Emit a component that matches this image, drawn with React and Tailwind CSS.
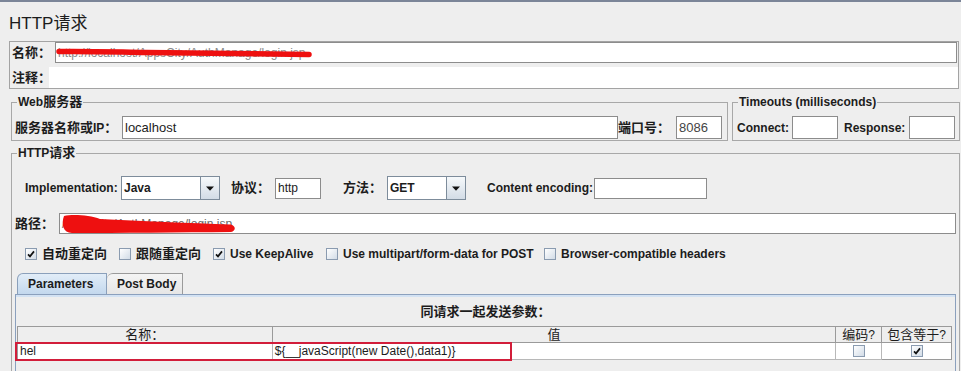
function Zh({ children, className = "" }) {
  return <span className={`text-[13px] ${className}`}>{children}</span>;
}

function Check({ checked }) {
  return (
    <span className="inline-flex h-[12px] w-[12px] shrink-0 items-center justify-center border border-[#8a9bb0] bg-linear-to-br from-white to-[#d2dce7]">
      {checked && (
        <svg width="8" height="8" viewBox="0 0 8 8">
          <path d="M1 4.3 L3 6.4 L7 1.4" fill="none" stroke="#111" strokeWidth="1.7" />
        </svg>
      )}
    </span>
  );
}

function Field({ className = "", children }) {
  return (
    <div className={`flex items-center border border-[#8c8c8c] bg-white pl-[2px] ${className}`}>
      {children}
    </div>
  );
}

function Combo({ value, className = "" }) {
  return (
    <div className={`flex h-[24px] border border-[#7d8c9b] bg-white ${className}`}>
      <div className="flex flex-1 items-center pl-[2px] font-bold">{value}</div>
      <div className="flex w-[19px] items-center justify-center border-l border-[#7d8c9b] bg-linear-to-b from-[#f6f9fb] to-[#d3dce6]">
        <svg width="8" height="5" viewBox="0 0 8 5">
          <path d="M0 0.5H8L4 4.8Z" fill="#111" />
        </svg>
      </div>
    </div>
  );
}

export default function App() {
  return (
    <div className="h-[371px] w-[961px] overflow-hidden bg-[#eeeeee] font-['Liberation_Sans','Noto_Sans_CJK_SC',sans-serif] text-[12px] leading-[14px] text-[#1c1c1c]">
      {/* window top edge */}
      <div className="h-[2px] bg-[#7b8598]" />

      {/* title */}
      <div className="h-[39px] pl-[9px] pt-[12px] text-[17px] leading-[20px]">HTTP请求</div>

      {/* name + comment */}
      <div className="ml-[9px] flex h-[48px] w-[950px] flex-col border border-[#a3a3a3]">
        <div className="flex h-[21px]">
          <div className="flex w-[45px] items-center whitespace-nowrap pl-[2px] font-bold">
            <Zh>名称：</Zh>
          </div>
          <div className="relative mr-[1px] flex flex-1 items-center border border-[#8c8c8c] bg-white pl-[2px] text-[#8a8a8a]">
            http://localhost/AppsCity/AuthManage/login.jsp
            <svg className="absolute left-0 top-0" width="270" height="20" viewBox="0 0 270 20">
              <path d="M3 8.5 C 30 8, 60 9, 90 9.5 C 150 10, 210 10.5, 253 11.5" fill="none" stroke="#ee1010" strokeWidth="5.5" strokeLinecap="round" />
            </svg>
          </div>
        </div>
        <div className="mt-[4px] flex h-[21px]">
          <div className="flex w-[39px] shrink-0 items-center whitespace-nowrap pl-[2px] font-bold">
            <Zh>注释：</Zh>
          </div>
          <div className="flex-1 bg-white" />
        </div>
      </div>

      {/* web server + timeouts */}
      <div className="ml-[11px] mt-[6px] flex gap-[4px]">
        <fieldset className="w-[717px] border border-[#a8a8a8] pb-[1px] pl-[2px] pr-[4px]">
          <legend className="ml-[3px] px-[1px] font-bold leading-[14px]">
            Web<Zh>服务器</Zh>
          </legend>
          <div className="mt-[7px] flex h-[23px] items-center">
            <span className="w-[108px] whitespace-nowrap pl-[1px] font-bold">
              <Zh>服务器名称或</Zh>IP<Zh>：</Zh>
            </span>
            <Field className="h-[23px] w-[496px] text-[13px]">localhost</Field>
            <span className="w-[58px] whitespace-nowrap font-bold">
              <Zh>端口号：</Zh>
            </span>
            <Field className="h-[23px] w-[46px] text-[13px] text-[#444]">8086</Field>
          </div>
        </fieldset>

        <fieldset className="w-[228px] border border-[#a8a8a8] pb-[1px] pl-[3px] pr-[3px]">
          <legend className="ml-[2px] px-[1px] font-bold leading-[14px]">Timeouts (milliseconds)</legend>
          <div className="mt-[7px] flex h-[23px] items-center">
            <span className="w-[56px] pl-[1px] font-bold">Connect:</span>
            <Field className="h-[23px] w-[46px]" />
            <span className="ml-[6px] w-[65px] font-bold">Response:</span>
            <Field className="h-[23px] w-[46px]" />
          </div>
        </fieldset>
      </div>

      {/* HTTP request */}
      <fieldset className="ml-[11px] mt-[5px] h-[240px] w-[949px] border border-[#a8a8a8] pl-[2px] pr-[3px]">
        <legend className="ml-[3px] px-[1px] font-bold leading-[14px]">
          HTTP<Zh>请求</Zh>
        </legend>

        <div className="mt-[16px] flex h-[24px] items-center">
          <span className="ml-[11px] w-[96px] font-bold">Implementation:</span>
          <Combo value="Java" className="w-[99px]" />
          <span className="ml-[11px] w-[44px] whitespace-nowrap font-bold">
            <Zh>协议：</Zh>
          </span>
          <Field className="h-[21px] w-[46px]">http</Field>
          <span className="ml-[22px] w-[44px] whitespace-nowrap font-bold">
            <Zh>方法：</Zh>
          </span>
          <Combo value="GET" className="w-[79px]" />
          <span className="ml-[21px] w-[107px] font-bold">Content encoding:</span>
          <Field className="h-[21px] w-[113px]" />
        </div>

        <div className="mt-[13px] flex h-[21px]">
          <span className="flex w-[45px] items-center whitespace-nowrap pl-[1px] font-bold">
            <Zh>路径：</Zh>
          </span>
          <div className="relative flex flex-1 items-center border border-[#8c8c8c] bg-white pl-[2px] text-[#6a6a6a]">
            /AppsCity/AuthManage/login.jsp
            <svg className="absolute left-0 top-0" width="190" height="21" viewBox="0 0 190 21">
              <path
                d="M4 2 C 12 0, 30 1, 40 5 C 80 7, 130 9, 171 10.5 C 176 12, 176 17, 171 18 C 120 18.5, 60 19, 12 19 C 3 19, 1 10, 4 2 Z"
                fill="#ee1010"
              />
            </svg>
          </div>
        </div>

        <div className="mt-[13px] flex h-[14px] items-center">
          <div className="ml-[11px] flex w-[94px] items-center gap-[5px] font-bold">
            <Check checked />
            <Zh>自动重定向</Zh>
          </div>
          <div className="flex w-[94px] items-center gap-[5px] font-bold">
            <Check />
            <Zh>跟随重定向</Zh>
          </div>
          <div className="flex w-[113px] items-center gap-[5px] font-bold">
            <Check checked />
            <span>Use KeepAlive</span>
          </div>
          <div className="flex w-[218px] items-center gap-[5px] font-bold">
            <Check />
            <span>Use multipart/form-data for POST</span>
          </div>
          <div className="flex items-center gap-[5px] font-bold">
            <Check />
            <span>Browser-compatible headers</span>
          </div>
        </div>

        {/* tabs */}
        <div className="ml-[1px] mt-[12px] flex h-[21px] items-end pl-[2px]">
          <div className="flex h-[21px] w-[90px] items-center rounded-tl-[6px] border border-b-0 border-[#8ba0bb] bg-linear-to-b from-[#e2edf8] to-[#c3d8ee] pl-[10px] font-bold">
            Parameters
          </div>
          <div className="flex h-[21px] w-[76px] items-center rounded-tl-[6px] border border-b-0 border-l-0 border-[#9a9a9a] bg-linear-to-b from-[#f4f4f4] to-[#e6e6e6] pl-[10px] font-bold">
            Post Body
          </div>
        </div>

        <div className="ml-[1px] flex h-[90px] flex-col border-l border-r border-t border-[#8ba0bd]">
          <div className="h-[2px] bg-[#d3e2f3]" />
          <div className="mt-[7px] flex h-[16px] items-center justify-center font-bold">
            <Zh>同请求一起发送参数：</Zh>
          </div>

          <div className="relative ml-[1px] mt-[6px] w-[935px]">
            <div className="flex h-[17px] border-l border-t border-[#9a9a9a]">
              <div className="flex w-[255px] items-center justify-center border-b border-r border-[#9a9a9a]">
                <Zh>名称：</Zh>
              </div>
              <div className="flex w-[564px] items-center justify-center border-b border-r border-[#9a9a9a]">
                <Zh>值</Zh>
              </div>
              <div className="flex w-[46px] items-center justify-center border-b border-r border-[#9a9a9a]">
                <Zh>编码</Zh>?
              </div>
              <div className="flex w-[70px] items-center justify-center border-b border-r border-[#9a9a9a]">
                <Zh>包含等于</Zh>?
              </div>
            </div>
            <div className="flex h-[17px] border-l border-[#9a9a9a] bg-white">
              <div className="flex w-[255px] items-center border-b border-r border-[#b8b8b8] pl-[2px]">hel</div>
              <div className="flex w-[564px] items-center border-b border-r border-[#b8b8b8] pl-[2px]">
                {"${__javaScript(new Date(),data1)}"}
              </div>
              <div className="flex w-[46px] items-center justify-center border-b border-r border-[#b8b8b8]">
                <Check />
              </div>
              <div className="flex w-[70px] items-center justify-center border-b border-r border-[#9a9a9a]">
                <Check checked />
              </div>
            </div>
            {/* red highlight drawn over the first row */}
            <div className="absolute left-[-2px] top-[16px] h-[19px] w-[497px] border-2 border-[#d21d3a]" />
          </div>
        </div>
      </fieldset>
    </div>
  );
}
